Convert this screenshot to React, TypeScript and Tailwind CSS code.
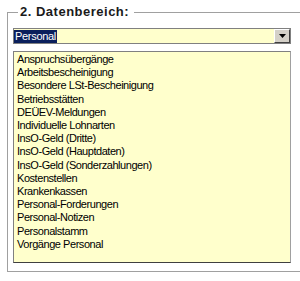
import React from "react";

const items = [
  "Anspruchsübergänge",
  "Arbeitsbescheinigung",
  "Besondere LSt-Bescheinigung",
  "Betriebsstätten",
  "DEÜEV-Meldungen",
  "Individuelle Lohnarten",
  "InsO-Geld (Dritte)",
  "InsO-Geld (Hauptdaten)",
  "InsO-Geld (Sonderzahlungen)",
  "Kostenstellen",
  "Krankenkassen",
  "Personal-Forderungen",
  "Personal-Notizen",
  "Personalstamm",
  "Vorgänge Personal",
];

export default function App() {
  return (
    <div
      className="w-[300px] h-[281px] bg-white overflow-hidden pt-[4px] pl-[7px]"
      style={{ fontFamily: '"Liberation Sans", Arial, sans-serif' }}
    >
      <fieldset className="w-[320px] h-[268px] border border-[#a0a0a0] pl-[5px]">
        <legend className="ml-[5px] pl-[2px] pr-[5px] text-[13px] leading-[16px] font-bold tracking-[0.5px] text-[#1a1a1a]">
          2. Datenbereich:
        </legend>
        <div className="mt-[8px] w-[278px] h-[16px] border border-[#808080] bg-[#ffffcc] flex items-stretch">
          <div className="flex-1 flex items-center">
            <span className="bg-[#0a1f5c] text-white text-[11px] leading-[13px] tracking-[-0.3px] px-[1px] h-[13px]">
              Personal
            </span>
          </div>
          <div className="w-[16px] border-t border-l border-t-white border-l-white border-r border-b border-r-[#404040] border-b-[#404040] bg-[#d4d0c8] flex items-center justify-center">
            <svg width="7" height="4" viewBox="0 0 7 4">
              <path d="M0 0H7L3.5 4Z" fill="#000" />
            </svg>
          </div>
        </div>
        <div className="mt-[7px] w-[278px] h-[212px] border border-[#808080] border-b-[#404040] border-r-[#a0a0a0] bg-[#ffffcc] pl-[3px] pt-[1px] text-[11px] leading-[13.2px] tracking-[-0.45px] text-black">
          {items.map((it) => (
            <div key={it} className="whitespace-nowrap">
              {it}
            </div>
          ))}
        </div>
      </fieldset>
    </div>
  );
}
